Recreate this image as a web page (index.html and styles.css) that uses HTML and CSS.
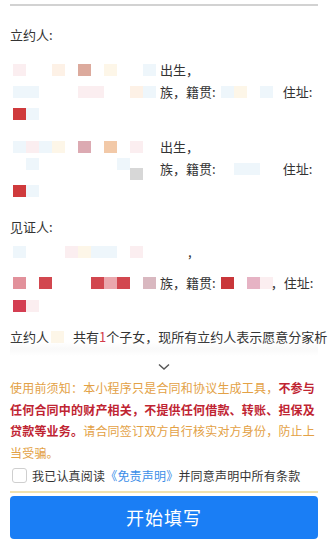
FILE: index.html
```html
<!DOCTYPE html>
<html lang="zh">
<head>
<meta charset="utf-8">
<link rel="stylesheet" href="styles.css">
</head>
<body>
<div class="page">
  <div class="topline"></div>
  <div class="doc">
    <div class="row r-title">立约人:</div>

    <div class="block blk-a">
      <div class="row"><span class="mos"><i class="m f1"></i><i class="m"></i><i class="m"></i><i class="m f2"></i><i class="m"></i><i class="m b1"></i><i class="m"></i><i class="m f3"></i><i class="m"></i><i class="m"></i><i class="m f4"></i></span><span class="t">出生，</span></div>
      <div class="row"><span class="mos"><i class="m f4"></i><i class="m f4"></i><i class="m"></i><i class="m"></i><i class="m"></i><i class="m f1"></i><i class="m f1"></i><i class="m"></i><i class="m"></i><i class="m f2"></i><i class="m f4"></i></span><span class="t">族，籍贯:</span><span class="mos2"><i class="m f4"></i><i class="m f3"></i><i class="m"></i><i class="m f4"></i></span><span class="t">住址:</span></div>
      <div class="row"><span class="mos"><i class="m red"></i><i class="m f4"></i></span></div>
    </div>

    <div class="block blk-b">
      <div class="row"><span class="mos"><i class="m f4"></i><i class="m f1"></i><i class="m f4"></i><i class="m f3"></i><i class="m"></i><i class="m b2"></i><i class="m"></i><i class="m b3"></i><i class="m"></i><i class="m f1"></i><i class="m"></i></span><span class="t">出生，</span></div>
      <div class="row"><span class="mos"><i class="m"></i><i class="m f4"></i><i class="m"></i><i class="m"></i><i class="m"></i><i class="m"></i><i class="m"></i><i class="m"></i><i class="m f4"></i><i class="m gray low"></i><i class="m"></i></span><span class="t">族，籍贯:</span><span class="mos2"><i class="m"></i><i class="m f4"></i><i class="m f4"></i><i class="m"></i></span><span class="t">住址:</span></div>
      <div class="row"><span class="mos"><i class="m red"></i><i class="m f4"></i></span></div>
    </div>

    <div class="row r-title w">见证人:</div>

    <div class="block blk-c">
      <div class="row"><span class="mos"><i class="m f4"></i><i class="m"></i><i class="m"></i><i class="m"></i><i class="m f1"></i><i class="m f3"></i><i class="m f4"></i><i class="m f4"></i><i class="m"></i><i class="m f1"></i><i class="m"></i></span><span class="t comma">,</span></div>
      <div class="row rc2"><span class="mos"><i class="m p1"></i><i class="m"></i><i class="m red2"></i><i class="m"></i><i class="m"></i><i class="m"></i><i class="m red2"></i><i class="m p2"></i><i class="m red2"></i><i class="m"></i><i class="m pg"></i></span><span class="t">族，籍贯:</span><span class="mos3"><i class="m red3"></i><i class="m"></i><i class="m p3"></i><i class="m f1"></i></span><span class="t end2">，住址:</span></div>
      <div class="row rc3"><span class="mos"><i class="m red4"></i><i class="m f1"></i></span></div>
    </div>

    <div class="row last"><span>立约人</span><i class="m f3 gapc"></i><span class="t">共有<b class="num">1</b>个子女，现所有立约人表示愿意分家析</span></div>
    <div class="fade"></div>
  </div>

  <div class="more">
    <svg width="12" height="8" viewBox="0 0 12 8"><polyline points="1,1.5 6,6 11,1.5" fill="none" stroke="#555" stroke-width="1.4"/></svg>
  </div>

  <p class="notice">使用前须知：本小程序只是合同和协议生成工具，<strong>不参与任何合同中的财产相关，不提供任何借款、转账、担保及贷款等业务。</strong>请合同签订双方自行核实对方身份，防止上当受骗。</p>

  <label class="agree"><span class="box"></span><span>我已认真阅读<span class="link">《免责声明》</span>并同意声明中所有条款</span></label>
  <div class="rule"></div>
  <button class="start">开始填写</button>
</div>
</body>
</html>
```

FILE: styles.css
```css
* { box-sizing: border-box; }
html, body { margin: 0; padding: 0; background: #fff; }
body {
  font-family: "Noto Sans CJK SC", "Noto Sans", sans-serif;
  color: #333;
  width: 328px;
  overflow: hidden;
}
.page { padding: 0 10px; }
.topline { margin-top: 4px; height: 2px; background: #d2d2d2; }

.doc { position: relative; font-size: 13px; }
.row { display: flex; align-items: center; height: 22px; line-height: 22px; white-space: nowrap; }
.r-title { margin-top: 18px; }
.r-title.w { margin-top: 14px; }
.blk-a { margin-top: 13px; }
.blk-b { margin-top: 11px; }
.blk-c { margin-top: 3px; }
.rc2 { margin-top: 9px; }
.rc3 { margin-top: 1px; }
.last { margin-top: 9px; }

.mos { display: flex; margin-left: 3px; width: 147px; flex: none; }
.mos2 { display: flex; width: 62px; margin-left: 5px; flex: none; }
.mos3 { display: flex; width: 52px; margin-left: 5px; flex: none; }
.m { display: block; width: 13px; height: 12px; flex: none; }
.m.low { margin-top: 10px; }
.t { flex: none; }
.comma { margin-left: 28px; }
.end2 { margin-left: -2px; }

.f1 { background: #fbeef0; }
.f2 { background: #fdf1e6; }
.f3 { background: #fdf6e8; }
.f4 { background: #eef6fb; }
.b1 { background: #dcaa9d; }
.b2 { background: #dcaab2; }
.b3 { background: #f2c9a8; }
.gray { background: #d7d7d7; }
.red { background: #cf3a3c; }
.red2 { background: #d2474f; }
.red3 { background: #c9363a; }
.red4 { background: #d43e52; }
.p1 { background: #e2919b; }
.p2 { background: #eaa7ad; }
.p3 { background: #e6b3c4; }
.pg { background: #d9b8c0; }
.gapc { margin: 0 9px 0 2px; }
.num { color: #d23a4a; font-weight: normal; }

.fade {
  position: absolute; left: 0; right: 0; bottom: -8px; height: 14px;
  background: linear-gradient(to bottom, rgba(255,255,255,0), rgba(245,245,245,0.6) 50%, rgba(255,255,255,1));
}

.more { display: flex; justify-content: center; margin-top: 12px; height: 14px; align-items: center; }
.more svg { display: block; }

.notice {
  margin: 3px 0 0;
  font-size: 12px;
  letter-spacing: 0.2px;
  line-height: 21.7px;
  color: #e3a145;
}
.notice strong { color: #bf2432; font-weight: bold; }

.agree { display: flex; align-items: center; height: 20px; margin-top: 2px; font-size: 12px; letter-spacing: 0.2px; color: #333; }
.box { width: 15px; height: 15px; border: 1px solid #cfcfcf; border-radius: 3px; margin: 0 5px 0 2px; flex: none; background: #fff; }
.link { color: #3b8ee8; }

.rule { margin-top: 5px; height: 2px; background: #f1e2b0; }

.start {
  display: block; width: 100%; margin-top: 3px; height: 43px;
  border: none; border-radius: 4px;
  background: #1a7ef5; color: #fff;
  font-family: "Noto Sans CJK SC", sans-serif;
  font-size: 18px; letter-spacing: 1px;
}
```
